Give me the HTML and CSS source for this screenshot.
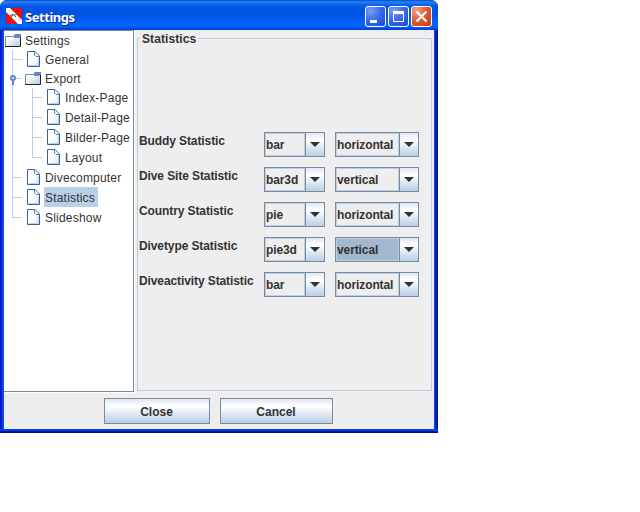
FILE: index.html
```html
<!DOCTYPE html>
<html lang="en">
<head>
<meta charset="utf-8">
<title>Settings</title>
<link rel="stylesheet" href="styles.css">
</head>
<body>
<svg class="defs" width="0" height="0">
  <defs>
    <linearGradient id="paper" x1="0" y1="0" x2="1" y2="1"><stop offset=".5" stop-color="#fff"/><stop offset="1" stop-color="#d4e3f1"/></linearGradient>
    <linearGradient id="fold" x1="0" y1="0" x2="1" y2="1"><stop offset=".2" stop-color="#fff"/><stop offset="1" stop-color="#b0c9e0"/></linearGradient>
    <symbol id="leaf" viewBox="0 0 13 16"><path d="M.5.500H8L12.500 5v10.500H.5z" fill="url(#paper)" stroke="#33659a"/><path d="M1.500 14.500h10V7" fill="none" stroke="#b8cfe5"/><path d="M7.500 1v3l1.500 1.500h3" fill="none" stroke="#5a86b4"/></symbol>
    <symbol id="folder" viewBox="0 0 16 13"><path d="M8.500 2l1.500-2h6v3H8.500z" fill="#6382bf"/><path d="M.5 2.500h8l1 1h6v9H.5z" fill="url(#fold)"/><path d="M.5 12V2.500h8l1 1h5" fill="none" stroke="#7a8a99"/><path d="M0 12.500h15.500V3" fill="none" stroke="#222"/></symbol>
  </defs>
</svg>
<div class="window">
  <header class="titlebar">
    <svg class="logo" width="16" height="16" viewBox="0 0 16 16"><path fill="#f00b12" d="M0 0h16v16H0z"/><path d="M0 0h4l12 12v4h-4L0 4z" fill="#fff"/><path d="M4 7.500l3-1 2 1 3-3M7 6l-2 4M8 7l2 2" fill="none" stroke="#6b4a48"/></svg>
    <h1>Settings</h1>
    <div class="controls">
      <svg class="ctl" viewBox="1 1 19 19"><path d="M5 14h7v3H5z" fill="#fff"/></svg>
      <svg class="ctl" viewBox="1 1 19 19"><path d="M5.500 5.500h10v10h-10z" fill="none" stroke="#fff"/><path d="M5 5h11v3H5z" fill="#fff"/></svg>
      <svg class="ctl close" viewBox="1 1 19 19"><path d="M5.500 5.500l10 10M15.500 5.500l-10 10" stroke="#fff" stroke-width="2.300"/></svg>
    </div>
  </header>
  <main class="content">
    <nav class="tree">
      <div class="row short"><svg class="folder"><use href="#folder"/></svg><span>Settings</span></div>
      <div class="row short"><i class="tee"></i><svg class="leaf"><use href="#leaf"/></svg><span>General</span></div>
      <div class="row short"><i class="tee knob"></i><svg class="folder"><use href="#folder"/></svg><span>Export</span></div>
      <div class="row short"><i class="bar"></i><i class="tee"></i><svg class="leaf"><use href="#leaf"/></svg><span>Index-Page</span></div>
      <div class="row"><i class="bar"></i><i class="tee"></i><svg class="leaf"><use href="#leaf"/></svg><span>Detail-Page</span></div>
      <div class="row"><i class="bar"></i><i class="tee"></i><svg class="leaf"><use href="#leaf"/></svg><span>Bilder-Page</span></div>
      <div class="row"><i class="bar"></i><i class="tee end"></i><svg class="leaf"><use href="#leaf"/></svg><span>Layout</span></div>
      <div class="row"><i class="tee"></i><svg class="leaf"><use href="#leaf"/></svg><span>Divecomputer</span></div>
      <div class="row"><i class="tee"></i><svg class="leaf"><use href="#leaf"/></svg><span class="selected">Statistics</span></div>
      <div class="row"><i class="tee end"></i><svg class="leaf"><use href="#leaf"/></svg><span>Slideshow</span></div>
    </nav>
    <section class="panel">
      <h2><span>Statistics</span></h2>
      <div class="form">
        <label>Buddy Statistic</label><div class="combo"><span>bar</span><b></b></div><div class="combo"><span>horizontal</span><b></b></div>
        <label>Dive Site Statistic</label><div class="combo"><span>bar3d</span><b></b></div><div class="combo"><span>vertical</span><b></b></div>
        <label>Country Statistic</label><div class="combo"><span>pie</span><b></b></div><div class="combo"><span>horizontal</span><b></b></div>
        <label>Divetype Statistic</label><div class="combo"><span>pie3d</span><b></b></div><div class="combo focus"><span>vertical</span><b></b></div>
        <label>Diveactivity Statistic</label><div class="combo"><span>bar</span><b></b></div><div class="combo"><span>horizontal</span><b></b></div>
      </div>
    </section>
  </main>
  <footer class="buttons"><button class="ok">Close</button><button class="cancel">Cancel</button></footer>
</div>
</body>
</html>
```
FILE: styles.css
```css
*, ::before, ::after { box-sizing: border-box; }
body { margin: 0; background: #fff; color: #333; font: 12px/14px "Liberation Sans", Arial, sans-serif; overflow: hidden; }
.defs { position: absolute; }
.window {
  width: 438px; height: 433px; padding: 0 4px 4px; display: flex; flex-direction: column;
  border-radius: 7px 7px 0 0;
  background: linear-gradient(90deg, #0010b8 0, #0019d0 1px, #0a50ee 3px, #0a50ee 4px, #0a50ee 434px, #0040e8 435px, #0018b0 436px, #00107c 438px);
  box-shadow: inset 0 -1px #00107c, inset 0 -2px #0018b0, inset 0 -4px #0441e0;
}
.titlebar {
  height: 30px; flex: none; margin: 0 -4px; padding: 2px 6px 0; display: flex; align-items: center;
  border-radius: 7px 7px 0 0;
  background: linear-gradient(#0049c8 0, #2b83f8 2px, #1069ef 4px, #0055e2 7px, #0054e3 15px, #0060f8 21px, #0066ff 26px, #0054e6 28px, #003dcc 30px);
}
.logo { margin-right: 3px; }
.titlebar h1 { margin: 2px 0 0; flex: 1; color: #fff; font: bold 13px/16px "Noto Sans", "Open Sans", sans-serif; letter-spacing: -.45px; text-shadow: 1px 1px #0a2a8c; }
.controls { display: flex; gap: 2px; }
.ctl { width: 21px; height: 21px; border: 1px solid #fff; border-radius: 3px; background: radial-gradient(circle at 25% 20%, #7ca0f3, #3c6cea 45%, #1748cc); }
.ctl.close { background: radial-gradient(circle at 25% 20%, #f0a38b, #e35a34 45%, #c43c18); }
.content { height: 363px; flex: none; display: flex; background: #eee; }
.tree { width: 130px; height: 362px; padding-left: 1px; border: 1px solid #7a8a99; border-left: 0; background: #fff; overflow: hidden; box-shadow: 1px 1px #fff; }
.row { display: flex; height: 20px; align-items: center; font-size: 12px; letter-spacing: .2px; white-space: nowrap; }
.row.short { height: 19px; }
.row span { height: 20px; line-height: 20px; padding: 1px 3px 0 1px; margin-left: -1px; }
.row.short span { padding-top: 0; }
.row .selected { background: #b8cfe5; }
.folder { width: 16px; height: 13px; margin: 0 4px 0 0; flex: none; }
.leaf { width: 13px; height: 16px; margin: 0 5px 0 2px; flex: none; }
.row.short .leaf { margin-bottom: 1px; }
.bar, .tee { width: 20px; height: 100%; flex: none; background: linear-gradient(#b8cfe5, #b8cfe5) 7px 0 / 1px 100% no-repeat; }
.tee { background: linear-gradient(#b8cfe5, #b8cfe5) 7px 0 / 1px 100% no-repeat, linear-gradient(#b8cfe5, #b8cfe5) 7px 10px / 10px 1px no-repeat; }
.short .tee { background-position: 7px 0, 7px 9px; }
.tee.end { background: linear-gradient(#b8cfe5, #b8cfe5) 7px 0 / 1px 10px no-repeat, linear-gradient(#b8cfe5, #b8cfe5) 7px 10px / 10px 1px no-repeat; }
.knob::before { content: ""; display: block; width: 6px; height: 6px; margin: 6px 0 0 5px; border: 2px solid #6382bf; border-radius: 3px; background: #fff; }
.knob::after { content: ""; display: block; width: 2px; height: 4px; margin-left: 7px; background: #6382bf; }
.panel { width: 295px; height: 353px; margin: 8px 0 0 3px; border: 1px solid #b8cfe5; }
.panel h2 { margin: -7px 0 0 2px; font: bold 12px/14px "Liberation Sans", Arial, sans-serif; }
.panel h2 span { padding: 0 2px; background: #eee; letter-spacing: .1px; }
.form { display: grid; grid-template-columns: 115px 61px 84px; column-gap: 10px; row-gap: 10px; margin: 86px 0 0 1px; font-weight: bold; }
.form label { padding-top: 2px; white-space: nowrap; letter-spacing: -.1px; }
.combo { display: flex; height: 25px; border: 1px solid #7a8a99; }
.combo span { flex: 1; min-width: 0; line-height: 22px; letter-spacing: -.1px; border: 1px solid #b8cfe5; }
.combo b { width: 19px; flex: none; display: flex; align-items: center; justify-content: center; border-left: 1px solid #7a8a99; background: linear-gradient(#dde8f3, #fff 30%, #b8cfe5); }
.combo b::before { content: ""; border: 5px solid transparent; border-top-color: #333; border-bottom: 0; }
.combo.focus span { background: #a3b8cc; }
.buttons { flex: 1; padding: 5px 0 0 100px; display: flex; gap: 10px; background: #eee; }
.buttons button { height: 26px; padding: 1px 1px 0 0; border: 1px solid #7a8a99; background: linear-gradient(#dde8f3, #fff 30%, #b8cfe5); color: #333; font: bold 12px/14px "Liberation Sans", Arial, sans-serif; }
.ok { width: 106px; }
.cancel { width: 113px; }
```
